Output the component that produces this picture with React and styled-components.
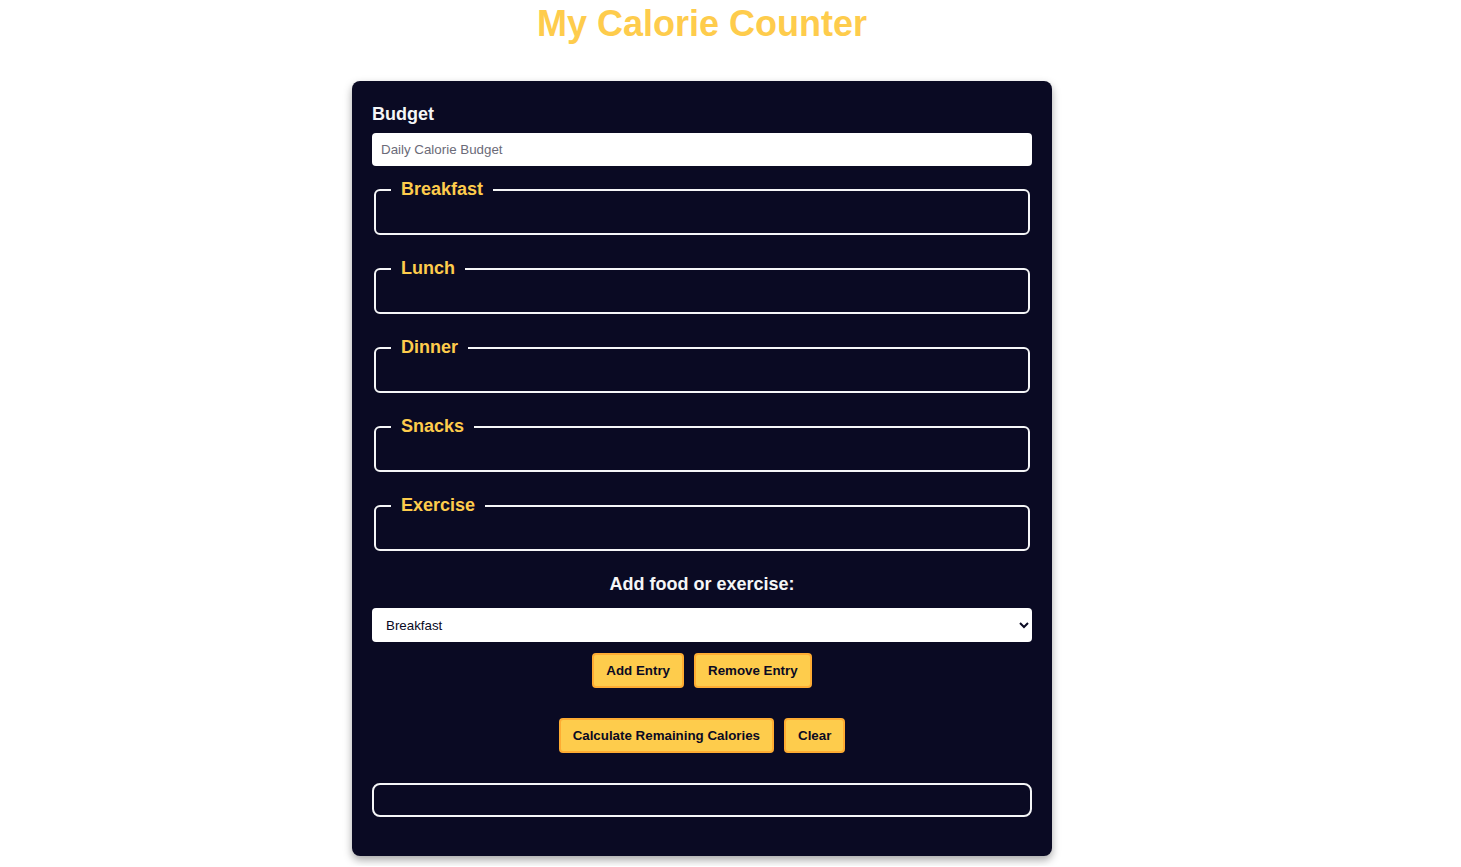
import React from "react";
import styled, { createGlobalStyle } from "styled-components";

const GlobalStyle = createGlobalStyle`
  html, body {
    margin: 0;
    padding: 0;
    background: #ffffff;
  }
  body {
    font-family: "Liberation Sans", Arial, Helvetica, sans-serif;
    font-size: 18px;
    color: #f5f6f7;
  }
  * { box-sizing: border-box; }
`;

const Page = styled.div`
  width: calc(100% - 57px);
  display: flex;
  flex-direction: column;
  align-items: center;
`;

const Title = styled.h1`
  margin: 3px 0 0;
  font-size: 36px;
  font-weight: 700;
  color: #fecc4c;
  text-align: center;
`;

const Card = styled.main`
  width: 700px;
  margin: 36px 0 10px;
  padding: 23px 20px 20px;
  background: #0a0a23;
  border-radius: 8px;
  box-shadow: 0 4px 9px rgba(0, 0, 0, 0.35);
`;

const Form = styled.form`
  display: flex;
  flex-direction: column;
`;

const Label = styled.label`
  display: block;
  font-weight: 700;
  font-size: 18px;
  color: #f5f6f7;
  margin: ${(p) => (p.$center ? "3px 0 13px" : "0 0 8px")};
  text-align: ${(p) => (p.$center ? "center" : "left")};
`;

const TextInput = styled.input`
  height: 33px;
  width: 100%;
  border: none;
  border-radius: 4px;
  padding: 0 9px;
  font-family: "Liberation Sans", Arial, sans-serif;
  font-size: 13.33px;
  color: #0a0a23;
  background: #ffffff;
  margin: 0 0 10px;
  &::placeholder {
    color: #6b6b78;
  }
`;

const Fieldset = styled.fieldset`
  margin: 0 2px 20px;
  padding: 0 15px 0;
  border: 2px solid #f5f6f7;
  border-radius: 6px;
  min-height: 59px;
`;

const Legend = styled.legend`
  padding: 0 10px 1px;
  font-weight: 700;
  font-size: 18px;
  line-height: 27px;
  color: #fecc4c;
`;

const Select = styled.select`
  width: 100%;
  height: 34px;
  border: none;
  border-radius: 4px;
  padding: 0 10px;
  font-family: "Liberation Sans", Arial, sans-serif;
  font-size: 13.33px;
  color: #0a0a23;
  background: #ffffff;
  margin: 0 0 11px;
`;

const ButtonRow = styled.div`
  display: flex;
  justify-content: center;
  gap: 10px;
  margin-bottom: ${(p) => p.$mb || 0}px;
`;

const Button = styled.button`
  font-family: "Liberation Sans", Arial, sans-serif;
  font-size: 13.33px;
  font-weight: 700;
  color: #0a0a23;
  background: #fecc4c;
  border: 2px solid #feac32;
  border-radius: 4px;
  padding: 8px 12px;
  height: 35px;
  cursor: pointer;
`;

const Output = styled.div`
  height: 34px;
  border: 2px solid #f5f6f7;
  border-radius: 8px;
  margin-bottom: 19px;
`;

const sections = ["Breakfast", "Lunch", "Dinner", "Snacks", "Exercise"];

export default function App() {
  return (
    <>
      <GlobalStyle />
      <Page>
        <Title>My Calorie Counter</Title>
        <Card>
          <Form onSubmit={(e) => e.preventDefault()}>
            <Label htmlFor="budget">Budget</Label>
            <TextInput id="budget" type="number" placeholder="Daily Calorie Budget" />
            {sections.map((s) => (
              <Fieldset key={s}>
                <Legend>{s}</Legend>
              </Fieldset>
            ))}
            <Label htmlFor="entry-dropdown" $center>
              Add food or exercise:
            </Label>
            <Select id="entry-dropdown" defaultValue="breakfast">
              {sections.map((s) => (
                <option key={s} value={s.toLowerCase()}>
                  {s}
                </option>
              ))}
            </Select>
            <ButtonRow $mb={30}>
              <Button type="button">Add Entry</Button>
              <Button type="button">Remove Entry</Button>
            </ButtonRow>
            <ButtonRow $mb={30}>
              <Button type="submit">Calculate Remaining Calories</Button>
              <Button type="button">Clear</Button>
            </ButtonRow>
            <Output />
          </Form>
        </Card>
      </Page>
    </>
  );
}
